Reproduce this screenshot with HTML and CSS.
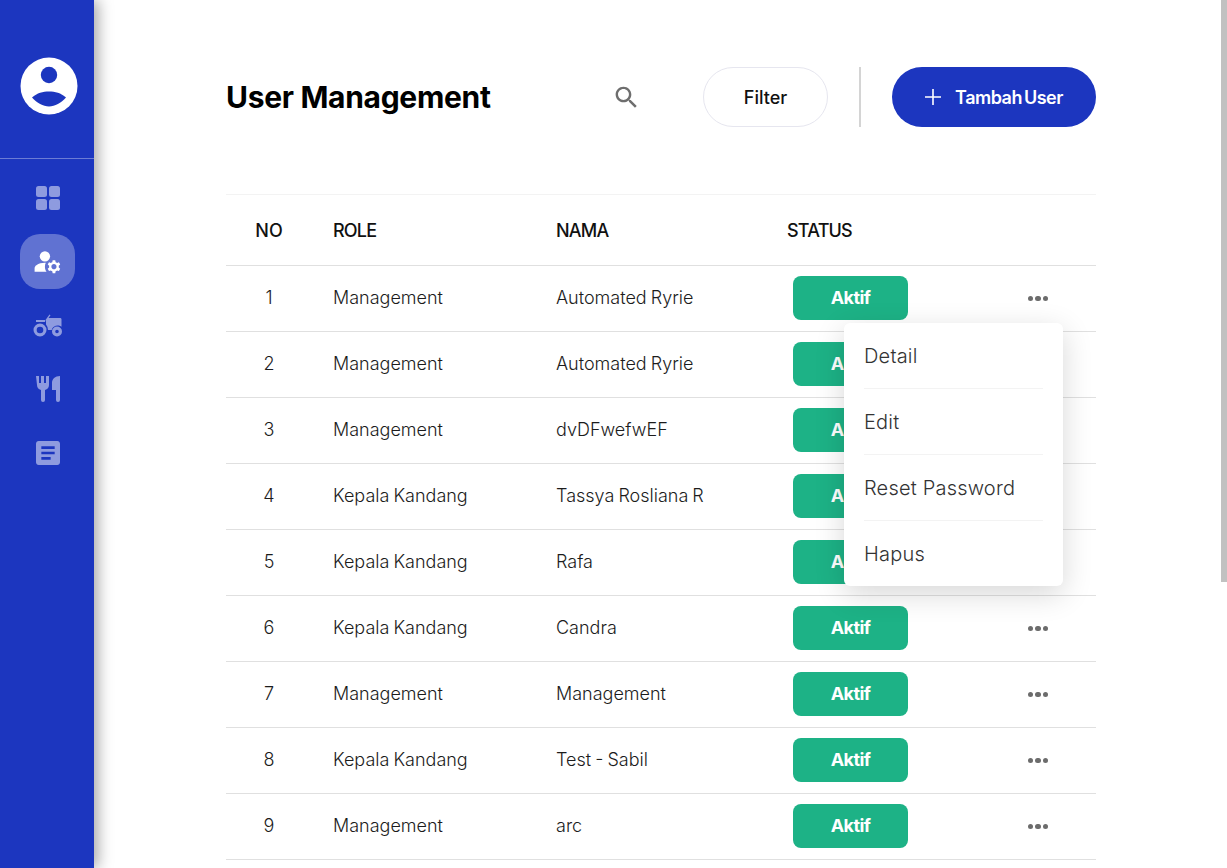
FILE: index.html
```html
<!DOCTYPE html>
<html>
<head>
  <meta charset="UTF-8">
  <title>User Management</title>
  <link rel="stylesheet" href="styles.css">
</head>
<body>

<aside class="sidebar">
  <div class="avatar-box">
    <svg class="avatar" viewBox="0 0 58 58" width="58" height="58">
      <circle cx="29" cy="29" r="28.5" fill="#fff"/>
      <circle cx="29" cy="18" r="8.2" fill="#1c36bf"/>
      <path d="M12 40.500C17 36 23 34.500 29 34.500S41 36 46 40.500C41 46 35 49.500 29 49.500S17 46 12 40.500z" fill="#1c36bf"/>
    </svg>
  </div>
  <nav class="nav">
    <a class="nav-item">
      <svg viewBox="0 0 24 24" width="24" height="24"><rect x="0" y="0" width="11" height="11" rx="2.500"/><rect x="13" y="0" width="11" height="11" rx="2.500"/><rect x="0" y="13" width="11" height="11" rx="2.500"/><rect x="13" y="13" width="11" height="11" rx="2.500"/></svg>
    </a>
    <a class="nav-item active">
      <svg viewBox="0 0 24 24" width="31" height="31"><circle cx="10" cy="8" r="4"/><path d="M10.670 13.020C10.450 13.010 10.230 13 10 13c-2.420 0-4.680.67-6.610 1.820C2.510 15.340 2 16.320 2 17.350V20h9.260c-.79-1.130-1.260-2.510-1.260-4 0-1.070.25-2.070.67-2.980z"/><path d="M20.750 16c0-.22-.03-.42-.06-.63l1.140-1.010-1-1.730-1.450.49c-.32-.27-.68-.48-1.080-.63L18 11h-2l-.3 1.490c-.4.15-.76.36-1.080.63l-1.450-.49-1 1.730 1.140 1.010c-.03.21-.06.41-.06.63s.03.42.06.63l-1.140 1.010 1 1.730 1.450-.49c.32.27.68.48 1.080.63L16 21h2l.3-1.490c.4-.15.76-.36 1.080-.63l1.450.49 1-1.730-1.140-1.010c.03-.21.06-.41.06-.63zM17 18c-1.100 0-2-.9-2-2s.9-2 2-2 2 .9 2 2-.9 2-2 2z"/></svg>
    </a>
    <a class="nav-item">
      <svg viewBox="0 0 30 24" width="30" height="24"><path fill-rule="evenodd" d="M15.500 5H27c1 0 1.500.5 1.500 1.500v7.200a6.200 6.200 0 0 0-9.800 3.300H15a8.500 8.500 0 0 0-2-5.500V9l-.5-2L16.500 1.500l1 .8zM3 7h9v2H3zM7 10.500a6.500 6.500 0 1 1 0 13 6.500 6.500 0 0 1 0-13zm0 3.200a3.300 3.300 0 1 0 0 6.600 3.300 3.300 0 0 0 0-6.600zM24 13.500a5 5 0 1 1 0 10 5 5 0 0 1 0-10zm0 3.200a1.800 1.800 0 1 0 0 3.600 1.800 1.800 0 0 0 0-3.600z"/></svg>
    </a>
    <a class="nav-item">
      <svg viewBox="0 0 24 26" width="24" height="26"><path d="M0 0h3v7h2V0h3v7h2V0h3v9c0 2.500-1.500 4.500-4 5v10a2 2 0 0 1-4 0V14c-2.500-.5-4-2.500-4-5zM24 0v24a2 2 0 0 1-4 0V14h-4V7c0-4 3-7 8-7z"/></svg>
    </a>
    <a class="nav-item">
      <svg viewBox="3 3 18 18" width="24" height="24"><path d="M19 3H5c-1.100 0-2 .9-2 2v14c0 1.100.9 2 2 2h14c1.100 0 2-.9 2-2V5c0-1.100-.9-2-2-2zm-5 14H7v-2h7v2zm3-4H7v-2h10v2zm0-4H7V7h10v2z"/></svg>
    </a>
  </nav>
</aside>

<div class="scroll-thumb"></div>

<main class="main">
  <header class="top">
    <h1 class="title">User Management</h1>
    <svg class="search" viewBox="0 0 24 24" width="29" height="29"><path d="M15.500 14h-.79l-.28-.27C15.410 12.590 16 11.110 16 9.500 16 5.910 13.090 3 9.500 3S3 5.910 3 9.500 5.910 16 9.500 16c1.610 0 3.090-.59 4.230-1.570l.27.28v.79l5 4.990L20.490 19l-4.990-5zm-6 0C7.010 14 5 11.990 5 9.500S7.010 5 9.500 5 14 7.010 14 9.500 11.990 14 9.500 14z"/></svg>
    <button class="btn-filter">Filter</button>
    <div class="divider"></div>
    <button class="btn-add">
      <svg viewBox="0 0 16 16" width="16" height="16"><path d="M8 0v16M0 8h16" stroke="#fff" stroke-width="1.600" fill="none"/></svg>
      Tambah User
    </button>
  </header>

  <section class="table">
    <div class="row head">
      <div class="no">NO</div>
      <div>ROLE</div>
      <div>NAMA</div>
      <div>STATUS</div>
      <div></div>
    </div>

    <div class="row">
      <div class="no">1</div><div>Management</div><div>Automated Ryrie</div>
      <div><span class="pill">Aktif</span></div><div class="dots"><i></i><i></i><i></i></div>
    </div>
    <div class="row">
      <div class="no">2</div><div>Management</div><div>Automated Ryrie</div>
      <div><span class="pill">Aktif</span></div><div class="dots"><i></i><i></i><i></i></div>
    </div>
    <div class="row">
      <div class="no">3</div><div>Management</div><div>dvDFwefwEF</div>
      <div><span class="pill">Aktif</span></div><div class="dots"><i></i><i></i><i></i></div>
    </div>
    <div class="row">
      <div class="no">4</div><div>Kepala Kandang</div><div>Tassya Rosliana R</div>
      <div><span class="pill">Aktif</span></div><div class="dots"><i></i><i></i><i></i></div>
    </div>
    <div class="row">
      <div class="no">5</div><div>Kepala Kandang</div><div>Rafa</div>
      <div><span class="pill">Aktif</span></div><div class="dots"><i></i><i></i><i></i></div>
    </div>
    <div class="row">
      <div class="no">6</div><div>Kepala Kandang</div><div>Candra</div>
      <div><span class="pill">Aktif</span></div><div class="dots"><i></i><i></i><i></i></div>
    </div>
    <div class="row">
      <div class="no">7</div><div>Management</div><div>Management</div>
      <div><span class="pill">Aktif</span></div><div class="dots"><i></i><i></i><i></i></div>
    </div>
    <div class="row">
      <div class="no">8</div><div>Kepala Kandang</div><div>Test - Sabil</div>
      <div><span class="pill">Aktif</span></div><div class="dots"><i></i><i></i><i></i></div>
    </div>
    <div class="row">
      <div class="no">9</div><div>Management</div><div>arc</div>
      <div><span class="pill">Aktif</span></div><div class="dots"><i></i><i></i><i></i></div>
    </div>

    <div class="menu">
      <div class="menu-item">Detail</div>
      <div class="menu-item">Edit</div>
      <div class="menu-item">Reset Password</div>
      <div class="menu-item">Hapus</div>
    </div>
  </section>
</main>

</body>
</html>
```

FILE: styles.css
```css
body {
  margin: 0;
  background: #fff;
  color: #222;
  font-family: Inter, "Noto Sans", sans-serif;
}

.scroll-thumb {
  position: fixed;
  top: 0;
  right: 0;
  width: 6px;
  height: 582px;
  background: #c1c1c1;
}

.sidebar {
  position: fixed;
  top: 0;
  left: 0;
  bottom: 0;
  width: 94px;
  background: #1c36bf;
  box-shadow: 4px 0 14px rgba(0, 0, 0, 0.35);
}
.avatar-box {
  height: 159px;
  display: flex;
  align-items: center;
  justify-content: center;
  padding: 14px 0 0 4px;
  box-sizing: border-box;
  border-bottom: 1px solid rgba(255, 255, 255, 0.35);
}
.nav {
  display: flex;
  flex-direction: column;
  align-items: center;
  padding: 11px 0 0 0;
  gap: 9px;
  margin-left: 1px;
}
.nav-item {
  width: 55px;
  height: 55px;
  display: flex;
  align-items: center;
  justify-content: center;
  border-radius: 20px;
}
.nav-item svg {
  fill: rgba(255, 255, 255, 0.5);
}
.nav-item.active {
  margin-bottom: -1px;
  background: rgba(255, 255, 255, 0.3);
}
.nav-item.active svg {
  fill: #fff;
}

.main {
  margin-left: 94px;
  padding: 67px 131px 435px 132px;
}
.top {
  display: flex;
  align-items: center;
  height: 60px;
}
.title {
  flex: 1;
  margin: 0;
  font-size: 30px;
  font-weight: 700;
  color: #000;
  letter-spacing: -0.3px;
}
.search {
  fill: #6e6e6e;
  margin-right: 62px;
}
.btn-filter {
  width: 125px;
  height: 60px;
  background: #fff;
  border: 1px solid #e6e6ef;
  border-radius: 30px;
  font-family: inherit;
  font-size: 18px;
  font-weight: 500;
  color: #111;
}
.divider {
  width: 2px;
  height: 60px;
  margin: 0 31px;
  background: #d4d4d4;
}
.btn-add {
  width: 204px;
  height: 60px;
  display: flex;
  align-items: center;
  justify-content: center;
  gap: 14px;
  background: #1c36bf;
  border: none;
  border-radius: 30px;
  font-family: inherit;
  font-size: 18px;
  font-weight: 600;
  color: #fff;
  letter-spacing: -0.5px;
  word-spacing: -2px;
}

.table {
  position: relative;
  margin-top: 67px;
  border-top: 1px solid #f3f3f3;
}
.row {
  display: grid;
  grid-template-columns: 86px 202px 210px 196px 68px;
  column-gap: 21px;
  align-items: center;
  height: 63px;
  padding-bottom: 2px;
  border-bottom: 1px solid #e0e0e0;
  font-size: 18px;
  font-weight: 300;
  color: #1c1c1c;
  word-spacing: -1px;
}
.head {
  height: 70px;
  padding-bottom: 0;
  font-weight: 500;
  color: #111;
  letter-spacing: -0.8px;
}
.head .no {
  letter-spacing: 0;
}
.no {
  text-align: center;
}
.pill {
  display: flex;
  align-items: center;
  justify-content: center;
  width: 115px;
  height: 44px;
  margin-left: 6px;
  background: #1db286;
  border-radius: 8px;
  color: #fff;
  font-weight: 700;
  letter-spacing: -0.6px;
}
.dots {
  display: flex;
  justify-content: center;
  gap: 2px;
  margin-top: 2px;
}
.dots i {
  width: 5.500px;
  height: 5.500px;
  border-radius: 50%;
  background: #6c6c6c;
}

.menu {
  position: absolute;
  top: 128px;
  left: 618px;
  width: 219px;
  padding: 0 20px;
  box-sizing: border-box;
  background: #fff;
  border-radius: 6px;
  box-shadow: 0 8px 30px rgba(0, 0, 0, 0.16);
}
.menu-item {
  height: 65px;
  display: flex;
  align-items: center;
  border-bottom: 1px solid #f3f3f3;
  font-size: 20px;
  font-weight: 300;
  color: #333;
  letter-spacing: 0.2px;
}
.menu-item:last-child {
  border-bottom: none;
}
```
